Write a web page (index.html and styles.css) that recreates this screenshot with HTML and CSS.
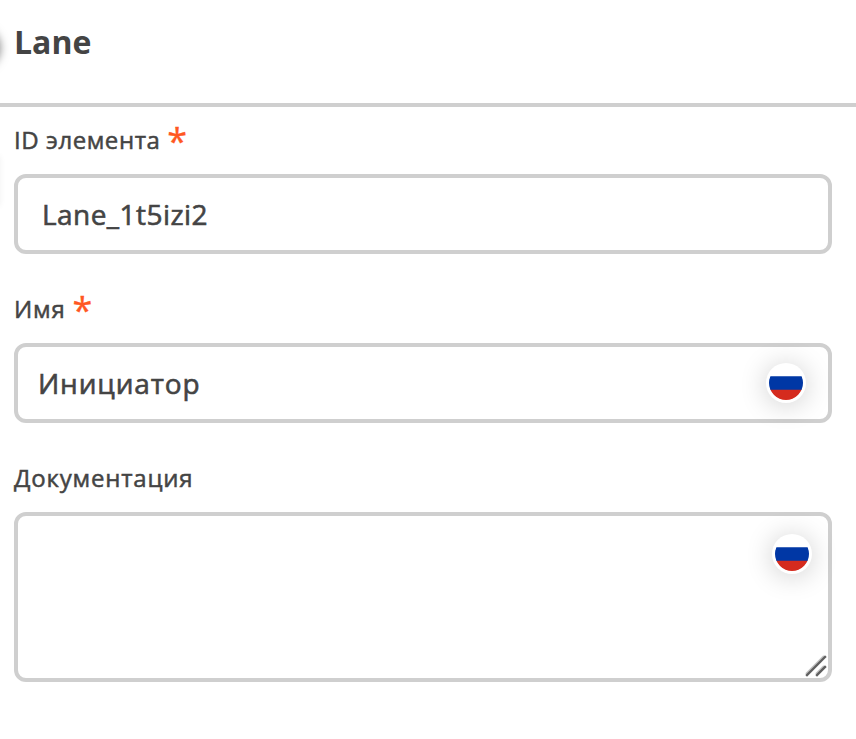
FILE: index.html
```html
<!DOCTYPE html>
<html lang="ru">
<head>
<meta charset="utf-8">
<title>Lane</title>
<link rel="stylesheet" href="styles.css">
</head>
<body>
<main class="panel">
  <header class="panel-header">
    <h1 class="title">Lane</h1>
    <span class="knob-shadow"></span>
    <span class="edge-shadow"></span>
  </header>
  <form class="fields">
    <section class="field">
      <div class="label">ID элемента<span class="required">*</span></div>
      <div class="control control-id">Lane_1t5izi2</div>
    </section>
    <section class="field">
      <div class="label label-wide">Имя<span class="required">*</span></div>
      <div class="control control-name">
        <span>Инициатор</span>
        <span class="locale"><svg class="flag" viewBox="0 0 34 34"><path fill="#0037a5" d="M1 10.3h32a17 17 0 0 1 0 14H1a17 17 0 0 1 0-14z"/><path fill="#d52b1e" d="M1.1 23.7h31.8a17 17 0 0 1-31.8 0z"/></svg></span>
      </div>
    </section>
    <section class="field">
      <div class="label label-wide">Документация</div>
      <div class="control control-docs">
        <span class="locale"><svg class="flag" viewBox="0 0 34 34"><path fill="#0037a5" d="M1 10.3h32a17 17 0 0 1 0 14H1a17 17 0 0 1 0-14z"/><path fill="#d52b1e" d="M1.1 23.7h31.8a17 17 0 0 1-31.8 0z"/></svg></span>
        <svg class="grip" viewBox="0 0 22 22" fill="none"><path d="M2 20 20 2M12 20l8-8" stroke="#c4c4c4" stroke-width="2" transform="translate(-1 -1)"/><path d="M2 20 20 2M12 20l8-8" stroke="#606060" stroke-width="2.4" stroke-linecap="square"/></svg>
      </div>
    </section>
  </form>
</main>
</body>
</html>
```
FILE: styles.css
```css
* {
  box-sizing: border-box;
}

body {
  margin: 0;
  background: #fff;
  color: #444;
  font-family: "Open Sans", sans-serif;
  font-weight: 400;
}

.panel {
  position: relative;
  height: 739px;
  overflow: hidden;
}

.panel-header {
  height: 107px;
  padding: 20px 14px 0;
  border-bottom: 4px solid #cfcfcf;
}

.title {
  margin: 0;
  font-size: 32px;
  line-height: 44px;
  font-weight: 700;
}

.knob-shadow {
  position: absolute;
  left: -40px;
  top: 26px;
  width: 40px;
  height: 40px;
  border-radius: 50%;
  box-shadow: 0 2px 10px rgba(0, 0, 0, 0.5);
}

.edge-shadow {
  position: absolute;
  left: -20px;
  top: 156px;
  width: 20px;
  height: 50px;
  box-shadow: 0 0 6px rgba(0, 0, 0, 0.06);
}

.fields {
  padding: 13px 24px 0 14px;
}

.field {
  margin-bottom: 35px;
}

.label {
  display: flex;
  height: 54px;
  font-size: 24px;
  line-height: 40px;
  letter-spacing: 0.55px;
  -webkit-text-stroke: 0.5px currentColor;
}

.label-wide {
  letter-spacing: 0.8px;
}

.required {
  margin-left: 7px;
  color: #ff5722;
  font-size: 36px;
  line-height: 42px;
  letter-spacing: 0;
  -webkit-text-stroke: 0.35px currentColor;
}

.control {
  display: flex;
  height: 80px;
  border: 4px solid #cfcfcf;
  border-radius: 12px;
  font-size: 28px;
  line-height: 72px;
  -webkit-text-stroke: 0.6px currentColor;
}

.control-id {
  padding-left: 24px;
  letter-spacing: 0.45px;
}

.control-name {
  justify-content: space-between;
  padding: 0 22px 0 20px;
  letter-spacing: 0.85px;
}

.control-name .locale {
  margin-top: 16px;
}

.control-docs {
  position: relative;
  justify-content: flex-end;
  height: 170px;
  padding: 18px 16px 0 0;
}

.locale {
  width: 40px;
  height: 40px;
  padding: 3px;
  border-radius: 50%;
  background: #fff;
  box-shadow: 0 2px 28px rgba(0, 0, 0, 0.2);
}

.flag {
  display: block;
  width: 34px;
  height: 34px;
  border-radius: 50%;
}

.grip {
  position: absolute;
  right: 1px;
  bottom: 1px;
  width: 22px;
  height: 22px;
}
```
